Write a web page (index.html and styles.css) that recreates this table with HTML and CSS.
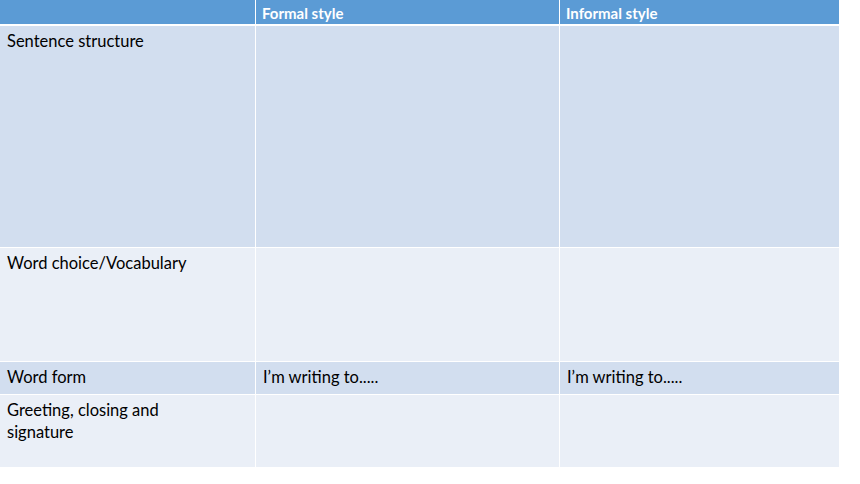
FILE: index.html
```html
<!DOCTYPE html>
<html>
<head>
<meta charset="utf-8">
<link rel="stylesheet" href="styles.css">
</head>
<body>
<div class="table">
  <div class="cell head"></div>
  <div class="cell head">Formal style</div>
  <div class="cell head">Informal style</div>

  <div class="cell dark">Sentence structure</div>
  <div class="cell dark"></div>
  <div class="cell dark"></div>

  <div class="cell light">Word choice/Vocabulary</div>
  <div class="cell light"></div>
  <div class="cell light"></div>

  <div class="cell dark">Word form</div>
  <div class="cell dark">I’m writing to.....</div>
  <div class="cell dark">I’m writing to.....</div>

  <div class="cell light">Greeting, closing and<br>signature</div>
  <div class="cell light"></div>
  <div class="cell light"></div>
</div>
</body>
</html>
```
FILE: styles.css
```css
html, body {
  margin: 0;
  padding: 0;
  background: #ffffff;
}
body {
  font-family: Lato, "Open Sans", sans-serif;
  font-size: 16.5px;
  color: #000000;
}
.table {
  display: grid;
  grid-template-columns: 255px 303px 279px;
  grid-template-rows: 25px 221px 113px 32px 72px;
  column-gap: 1px;
  row-gap: 1px;
  width: 839px;
}
.cell {
  padding: 4px 7px 0 7px;
  line-height: 22px;
  box-sizing: border-box;
  overflow: hidden;
}
.head {
  background: #5b9bd5;
  color: #ffffff;
  font-weight: bold;
  font-size: 15px;
  height: 24px;
  align-self: start;
  padding-top: 2px;
  padding-left: 6px;
}
.dark {
  background: #d2deef;
}
.light {
  background: #eaeff7;
}
```
